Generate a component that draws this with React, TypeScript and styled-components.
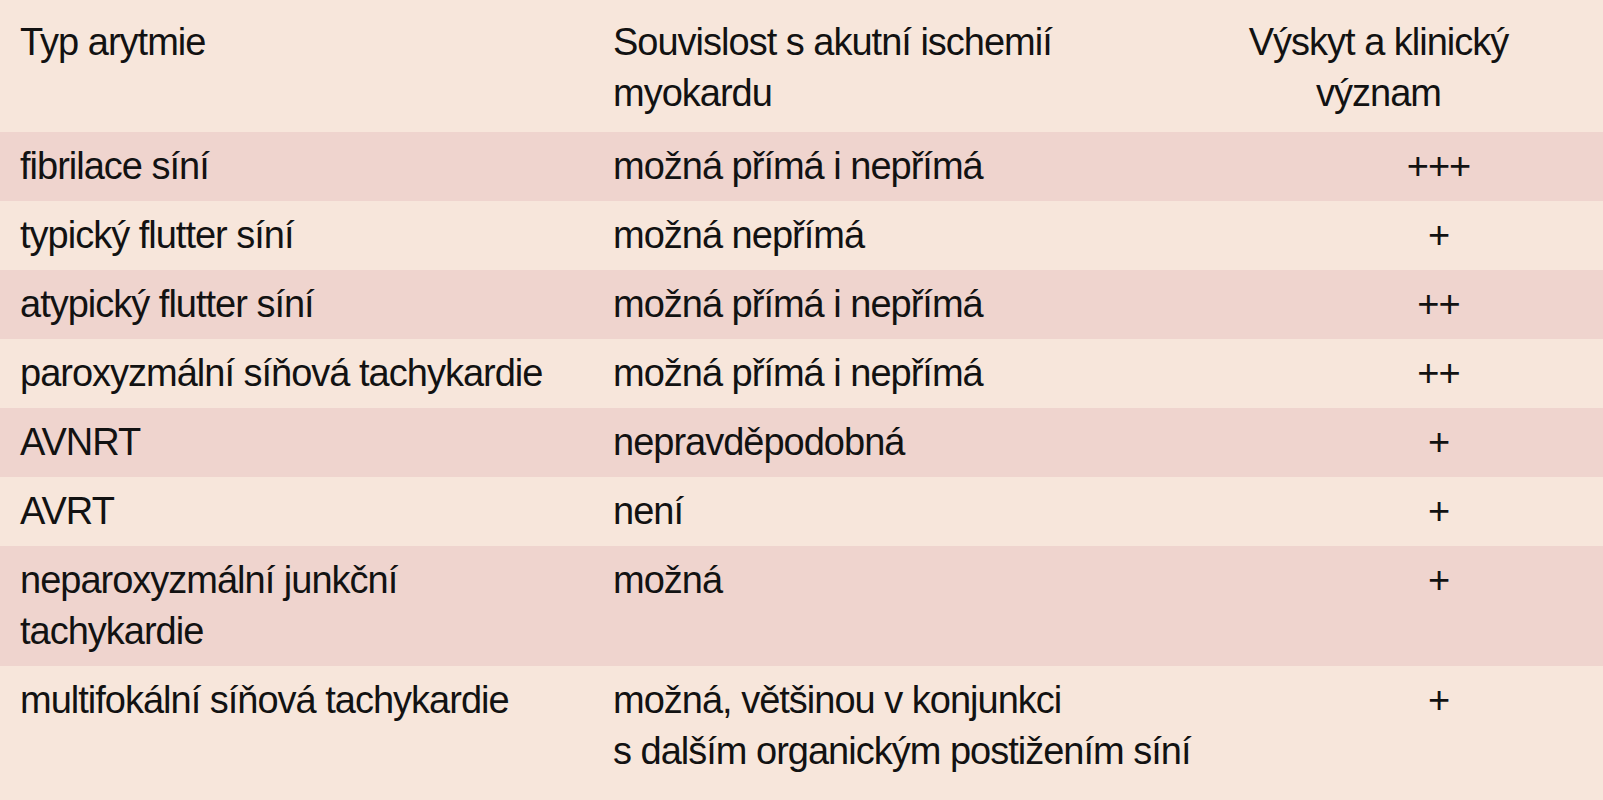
import styled, { createGlobalStyle } from "styled-components";

const GlobalStyle = createGlobalStyle`
  html, body {
    margin: 0;
    padding: 0;
    background: #F7E6DB;
    overflow: hidden;
  }
`;

const Table = styled.div`
  width: 1603px;
  display: flex;
  flex-direction: column;
  font-family: "Liberation Sans Narrow", "Arial Narrow", "Liberation Sans", sans-serif;
  font-size: 38px;
  letter-spacing: -1px;
  line-height: 51px;
  color: #121212;
`;

const Row = styled.div<{ $shaded?: boolean; $head?: boolean }>`
  display: grid;
  grid-template-columns: 593px 647px 1fr;
  background: ${(p) => (p.$shaded ? "#EFD4CE" : "#F7E6DB")};
  padding: ${(p) => (p.$head ? "17px 0 13px" : "9px 0")};
`;

const TypeCell = styled.div`
  padding: 0 40px 0 20px;
`;

const LinkCell = styled.div`
  padding: 0 40px 0 20px;
`;

const ValueCell = styled.div<{ $head?: boolean }>`
  text-align: center;
  padding: ${(p) => (p.$head ? "0 86px 0 0" : "0 0 0 34px")};
`;

type Item = { type: string; link: React.ReactNode; value: string };

const rows: Item[] = [
  { type: "fibrilace síní", link: "možná přímá i nepřímá", value: "+++" },
  { type: "typický flutter síní", link: "možná nepřímá", value: "+" },
  { type: "atypický flutter síní", link: "možná přímá i nepřímá", value: "++" },
  { type: "paroxyzmální síňová tachykardie", link: "možná přímá i nepřímá", value: "++" },
  { type: "AVNRT", link: "nepravděpodobná", value: "+" },
  { type: "AVRT", link: "není", value: "+" },
  { type: "neparoxyzmální junkční tachykardie", link: "možná", value: "+" },
  {
    type: "multifokální síňová tachykardie",
    link: (
      <>
        možná, většinou v konjunkci
        <br />s dalším organickým postižením síní
      </>
    ),
    value: "+",
  },
];

const App = () => {
  return (
    <>
      <GlobalStyle />
      <Table>
        <Row $head>
          <TypeCell>Typ arytmie</TypeCell>
          <LinkCell>Souvislost s akutní ischemií myokardu</LinkCell>
          <ValueCell $head>Výskyt a klinický význam</ValueCell>
        </Row>
        {rows.map((r, i) => (
          <Row key={r.type} $shaded={i % 2 === 0}>
            <TypeCell>{r.type}</TypeCell>
            <LinkCell>{r.link}</LinkCell>
            <ValueCell>{r.value}</ValueCell>
          </Row>
        ))}
      </Table>
    </>
  );
};

export default App;
